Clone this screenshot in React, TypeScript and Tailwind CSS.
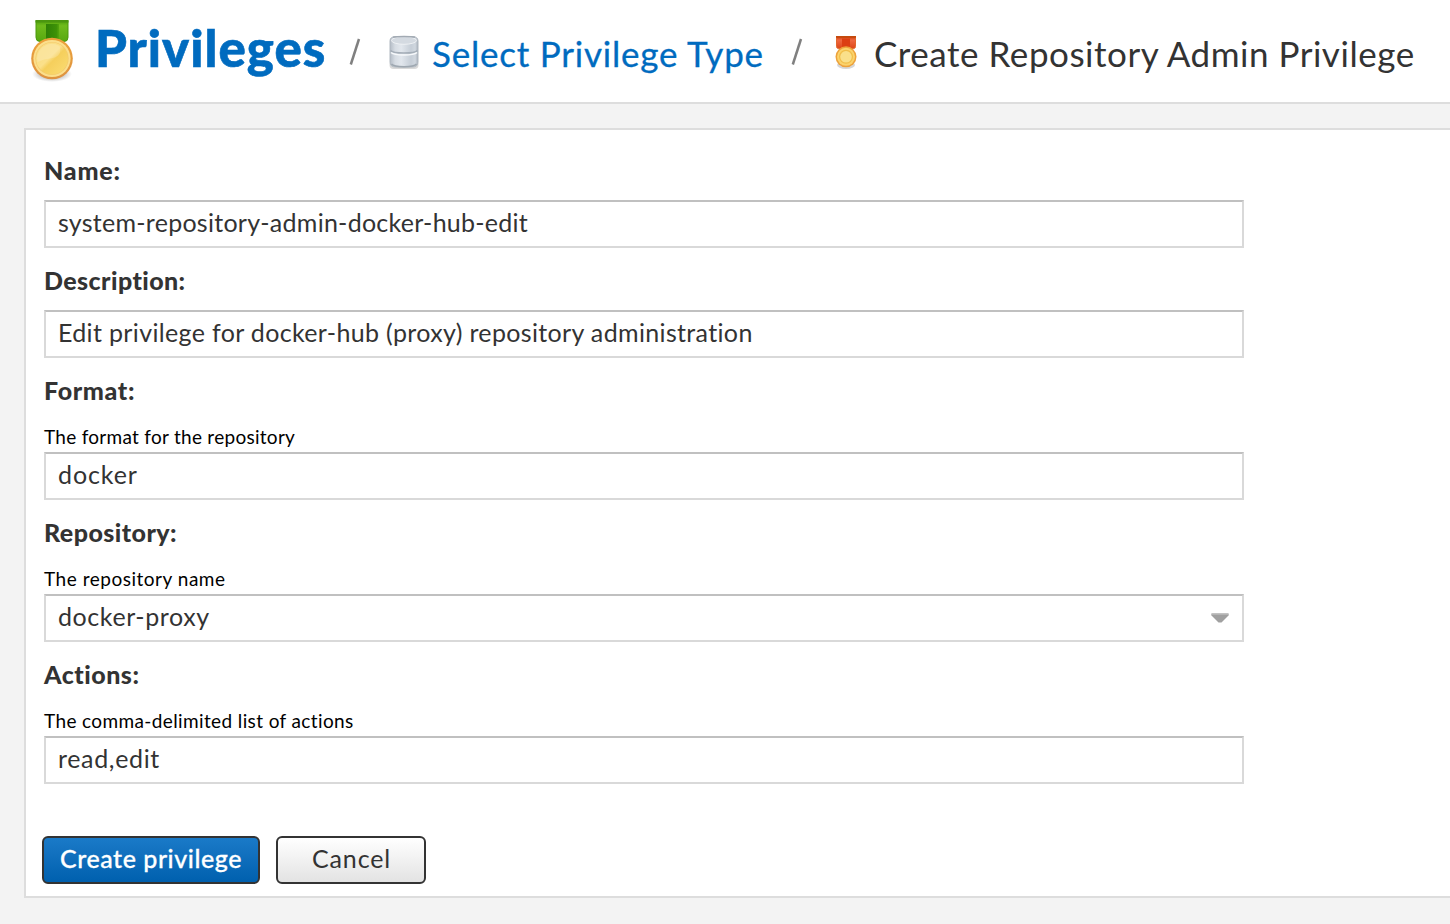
import type { ReactNode } from "react";

function PrivilegeIcon() {
  return (
    <svg className="ml-[28px] h-[66px] w-[48px] shrink-0" viewBox="28 17 48 66">
      <defs>
        <linearGradient id="greenRibbon" x1="0" y1="0" x2="0" y2="1">
          <stop offset="0" stopColor="#4c9f0c" />
          <stop offset="0.25" stopColor="#6fbb1c" />
          <stop offset="1" stopColor="#57a80f" />
        </linearGradient>
        <linearGradient id="greenFold" x1="0" y1="0" x2="1" y2="0">
          <stop offset="0" stopColor="#2f8006" />
          <stop offset="0.8" stopColor="#3d9207" />
          <stop offset="1" stopColor="#55a50e" />
        </linearGradient>
        <linearGradient id="goldRim" x1="0" y1="0" x2="0" y2="1">
          <stop offset="0" stopColor="#eda23a" />
          <stop offset="1" stopColor="#dd9240" />
        </linearGradient>
        <linearGradient id="goldFace" x1="0" y1="0" x2="1" y2="1">
          <stop offset="0" stopColor="#f9dc80" />
          <stop offset="0.45" stopColor="#fbe08a" />
          <stop offset="0.55" stopColor="#f5cf5c" />
          <stop offset="1" stopColor="#fbdc74" />
        </linearGradient>
        <radialGradient id="medalShadow">
          <stop offset="0.5" stopColor="#777" stopOpacity="0.5" />
          <stop offset="1" stopColor="#999" stopOpacity="0" />
        </radialGradient>
      </defs>
      <ellipse cx="52" cy="74" rx="20" ry="8" fill="url(#medalShadow)" />
      <path d="M36 20.500h32v17q0 4-4 4H40q-4 0-4-4z" fill="url(#greenRibbon)" stroke="#4a980c" />
      <path d="M46 24h13v17H46z" fill="url(#greenFold)" />
      <path d="M35.500 20h33v2.500h-33z" fill="#4a960f" />
      <circle cx="52" cy="58.500" r="20.800" fill="url(#goldRim)" />
      <circle cx="52" cy="58.500" r="18.600" fill="#fbdf8c" />
      <circle cx="52" cy="58.500" r="16.600" fill="#f3ca6c" />
      <circle cx="52" cy="58.500" r="15.900" fill="url(#goldFace)" />
      <path d="M37.500 62q-2-9 5-15 8-6 17-1 3 10-7 12-9 1-15 4z" fill="#fff" opacity="0.18" />
    </svg>
  );
}

function DatabaseIcon() {
  return (
    <svg className="h-[36px] w-[32px] shrink-0" viewBox="388 34 32 36">
      <defs>
        <linearGradient id="drum" x1="0" y1="0" x2="1" y2="0">
          <stop offset="0" stopColor="#b4bcc6" />
          <stop offset="0.18" stopColor="#d6dce3" />
          <stop offset="0.4" stopColor="#e2e7ed" />
          <stop offset="0.75" stopColor="#c6ced7" />
          <stop offset="0.9" stopColor="#d0d7df" />
          <stop offset="1" stopColor="#a9b1bb" />
        </linearGradient>
      </defs>
      <rect x="389.500" y="61" width="29" height="8" rx="4" fill="#777" opacity="0.28" />
      <path d="M390 41q0-4.500 6-4.500h16q6 0 6 4.500v21q0 5-6 5h-16q-6 0-6-5z" fill="url(#drum)" stroke="#b0b8c0" />
      <ellipse cx="404" cy="40.500" rx="12.500" ry="3.800" fill="#d4dae1" stroke="#eef1f4" />
      <path d="M393 37.300q3-.8 11-.8t11 .8" fill="none" stroke="#a2aab3" strokeWidth="1.400" />
      <path d="M390.500 50.500q2 2.500 13.500 2.500t13.500-2.500" fill="none" stroke="#a5aeb8" strokeWidth="1.600" />
      <path d="M391 52.500q3 2.500 13 2.500t13-2.500" fill="none" stroke="#f7f9fb" strokeWidth="1.600" />
      <path d="M391.500 64q2 2.700 12.500 2.700T416.500 64" fill="none" stroke="#9ea7b0" strokeWidth="1.400" />
    </svg>
  );
}

function AdminMedalIcon() {
  return (
    <svg className="h-[36px] w-[28px] shrink-0" viewBox="832 34 28 36">
      <defs>
        <linearGradient id="redRibbon" x1="0" y1="0" x2="0" y2="1">
          <stop offset="0" stopColor="#c93d0c" />
          <stop offset="0.3" stopColor="#ef6840" />
          <stop offset="1" stopColor="#dd4718" />
        </linearGradient>
      </defs>
      <ellipse cx="846" cy="65" rx="9" ry="4" fill="#777" opacity="0.3" />
      <path d="M836.500 36.500h19v10q0 2-2 2h-15q-2 0-2-2z" fill="url(#redRibbon)" stroke="#e2672c" />
      <path d="M842 38.500h8v9h-8z" fill="#dc3f12" />
      <path d="M836 36h20v1.800h-20z" fill="#c44a0d" />
      <circle cx="846" cy="56.800" r="10.500" fill="#eda23b" />
      <circle cx="846" cy="56.800" r="9" fill="#fbd36c" />
      <circle cx="846" cy="56.800" r="7" fill="#f1bd48" />
      <circle cx="846" cy="56.800" r="5.800" fill="#fae08a" />
    </svg>
  );
}

function Slash({ className }: { className: string }) {
  return (
    <svg className={"h-[28px] w-[12px] shrink-0 " + className} viewBox="0 0 12 28">
      <path d="M10 1L1.800 26.500" stroke="#808080" strokeWidth="2.500" />
    </svg>
  );
}

interface FieldProps {
  label: string;
  labelClass: string;
  help?: ReactNode;
  value: string;
  valueClass: string;
  select?: boolean;
}

function Field({ label, labelClass, help, value, valueClass, select }: FieldProps) {
  return (
    <div className="mb-4 w-[1200px]">
      <div className={"h-[46px] text-[25px] font-black leading-[33px] " + labelClass}>{label}</div>
      {help}
      <div className="flex h-12 items-center justify-between border-2 border-[#d9d9d9] border-t-[#c0c0c0] bg-white pr-[13px] pl-3">
        <span className={"pb-[4px] text-[25px] leading-[30px] " + valueClass}>{value}</span>
        {select && (
          <svg className="h-[10px] w-[18px]" viewBox="0 0 18 10">
            <path d="M0.500 0.500h17v2L10.500 9.500h-3L0.500 2.500z" fill="#a0a0a0" />
            <path d="M0.500 0.500h17v1.500h-17z" fill="#b5b5b5" />
          </svg>
        )}
      </div>
    </div>
  );
}

export default function App() {
  return (
    <div className="flex h-[924px] w-full flex-col overflow-hidden bg-[#f3f3f3] font-['Lato',sans-serif] text-[#333]">
      <header className="flex h-[104px] shrink-0 items-center border-b-2 border-[#ddd] bg-white pb-[2px] whitespace-nowrap">
        <PrivilegeIcon />
        <h1 className="mb-[4px] ml-[19px] w-[231px] text-[51px] font-black leading-[60px] tracking-[1px] text-[#006bbf] [-webkit-text-stroke:0.6px_#006bbf]">Privileges</h1>
        <Slash className="mt-[4px] ml-[23px]" />
        <div className="mt-[4px] ml-[27px]"><DatabaseIcon /></div>
        <span className="mt-[6px] ml-[12px] w-[333px] text-[35px] leading-[42px] tracking-[0.78px] text-[#006bbf] [-webkit-text-stroke:0.3px_#006bbf]">Select Privilege Type</span>
        <Slash className="mt-[4px] ml-[26px]" />
        <div className="mt-[4px] ml-[29px]"><AdminMedalIcon /></div>
        <span className="mt-[6px] ml-[14px] text-[35px] leading-[42px] tracking-[0.53px]">Create Repository Admin Privilege</span>
      </header>
      <main className="mt-6 ml-6 h-[770px] shrink-0 border-y-2 border-l-2 border-[#ddd] bg-white pt-6 pl-[18px]">
        <Field label="Name:" labelClass="tracking-[0.8px]" value="system-repository-admin-docker-hub-edit" valueClass="tracking-[0.26px]" />
        <Field label="Description:" labelClass="tracking-[0.42px]" value="Edit privilege for docker-hub (proxy) repository administration" valueClass="tracking-[0.345px]" />
        <Field label="Format:" labelClass="tracking-[0.65px]" help={<div className="h-8 text-[19px] leading-[33px] tracking-[0.28px] text-black">The format for the repository</div>} value="docker" valueClass="tracking-[0.9px]" />
        <Field label="Repository:" labelClass="tracking-[0.45px]" help={<div className="h-8 text-[19px] leading-[33px] tracking-[0.52px] text-black">The repository name</div>} value="docker-proxy" valueClass="tracking-[0.58px]" select />
        <Field label="Actions:" labelClass="tracking-[0.5px]" help={<div className="h-8 text-[19px] leading-[33px] tracking-[0.38px] text-black">The comma-delimited list of actions</div>} value="read,edit" valueClass="tracking-[0.65px]" />
        <div className="mt-[52px] -ml-[2px] flex gap-4">
          <button className="h-12 w-[218px] rounded-[6px] border-2 border-[#333] bg-linear-to-b from-[#1a7ac8] to-[#0060ae] pb-[4px] text-[25px] font-medium leading-[30px] tracking-[0.55px] whitespace-nowrap text-white [-webkit-text-stroke:0.3px_white]">Create privilege</button>
          <button className="h-12 w-[150px] rounded-[6px] border-2 border-[#333] bg-linear-to-b from-white to-[#e3e3e3] pb-[4px] pl-[1px] text-[25px] leading-[30px] tracking-[0.85px]">Cancel</button>
        </div>
      </main>
    </div>
  );
}
